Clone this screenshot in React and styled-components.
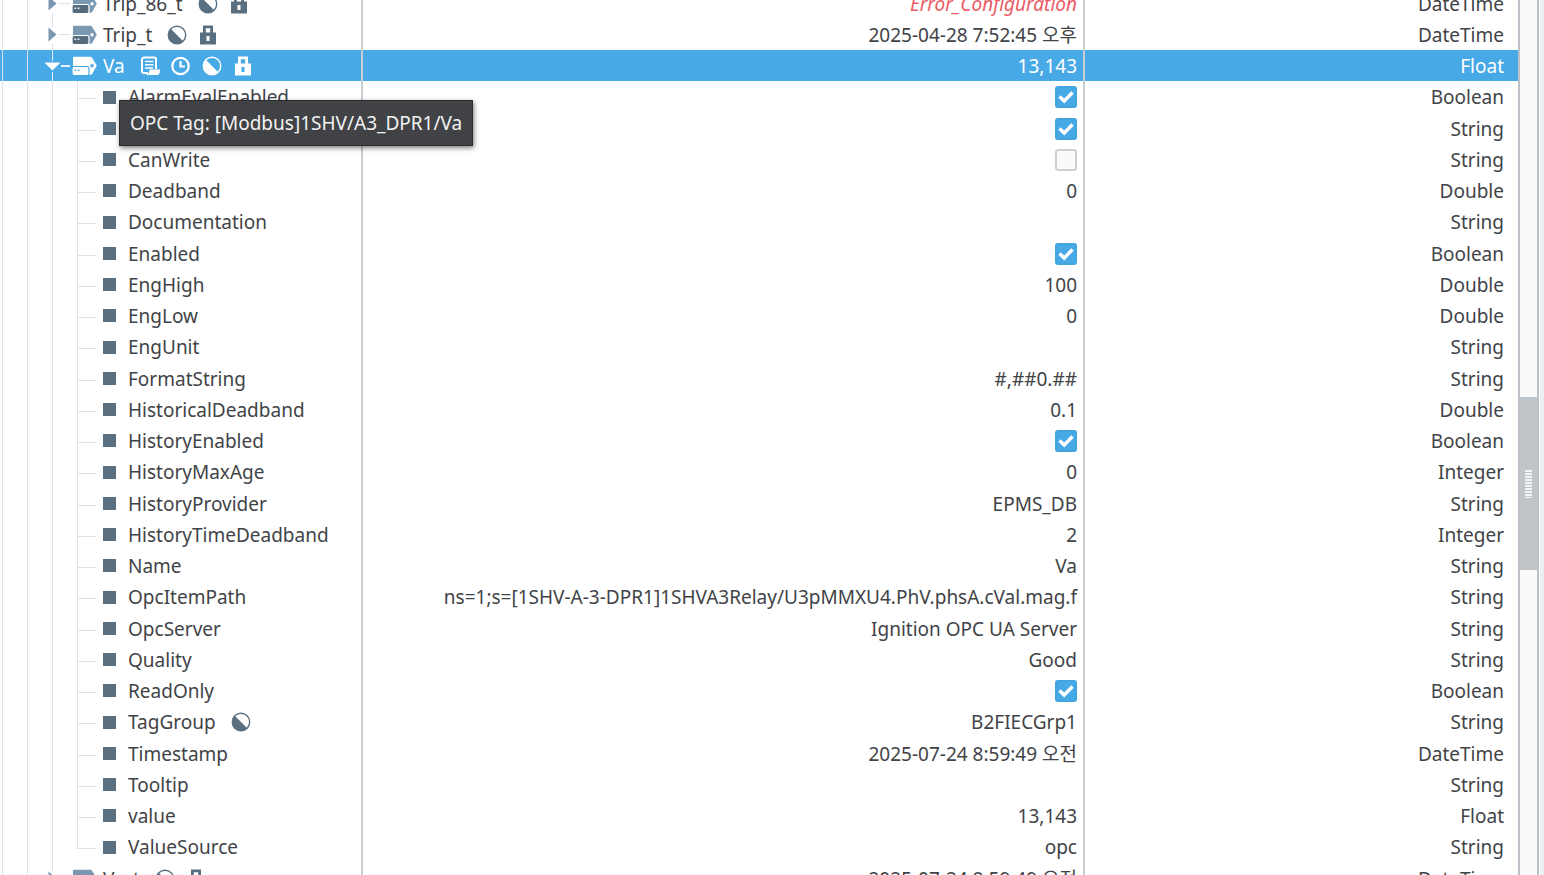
import React from "react";
import styled, { createGlobalStyle } from "styled-components";

const GlobalStyle = createGlobalStyle`
  * {
    box-sizing: border-box;
  }

  body {
    margin: 0;
    background-color: #ffffff;
    color: #414347;
    font-family: "Noto Sans", "Noto Sans CJK KR", sans-serif;
    font-size: 19px;
    line-height: 28px;
  }
`;

const Browser = styled.main`
  display: flex;
  height: 100vh;
  overflow: hidden;
`;

const Viewport = styled.div`
  flex: 1;
  min-width: 0;
  overflow: hidden;
`;

const TagTable = styled.table`
  width: 100%;
  margin-top: -12px;
  table-layout: fixed;
  border-collapse: separate;
  border-spacing: 0;
`;

const NameCol = styled.col`
  width: 363px;
`;

const ValueCol = styled.col`
  width: 722px;
`;

const Row = styled.tr`
  height: 31px;
  color: ${(props) => (props.$selected ? "#ffffff" : "inherit")};
  background-color: ${(props) => (props.$selected ? "#47a9e6" : "#ffffff")};

  &:nth-child(4n) {
    height: 32px;
  }
`;

const NameCell = styled.td`
  position: relative;
  height: inherit;
  padding: 0 0 0 2px;
  border-right: 2px solid #c8cdd1;
`;

const NameContent = styled.div`
  display: flex;
  align-items: center;
  height: 100%;
  white-space: nowrap;
`;

const ValueCell = styled.td`
  padding: 0 6px 0 0;
  border-right: 2px solid #c8cdd1;
  text-align: right;
  white-space: nowrap;
  color: ${(props) => (props.$error ? "#ec5a64" : "inherit")};
  font-style: ${(props) => (props.$error ? "italic" : "normal")};
`;

const TypeCell = styled.td`
  padding: 0 14px 0 0;
  text-align: right;
`;

const Guide = styled.span`
  flex: 0 0 25px;
  align-self: stretch;
  border-left: 1px solid #dce2e8;
`;

const Branch = styled.span`
  display: flex;
  flex-direction: column;
  flex: 0 0 26px;
  align-self: stretch;

  &::before {
    content: "";
    width: 18px;
    height: 17px;
    border-left: 1px solid #dce2e8;
    border-bottom: 1px solid #dce2e8;
  }

  &::after {
    content: "";
    flex: 1;
    border-left: ${(props) => (props.$last ? "none" : "1px solid #dce2e8")};
  }
`;

const Toggle = styled.button`
  display: block;
  height: 31px;
  margin: 0 0 0 -12px;
  padding: 0;
  border: none;
  background: none;

  svg {
    display: block;
  }
`;

const Square = styled.span`
  width: 13px;
  height: 13px;
  margin-right: 12px;
  background-color: #5a6f80;
`;

const Label = styled.span`
  margin-right: 15px;
`;

const Badges = styled.span`
  display: flex;
  gap: 11px;
  color: ${(props) => (props.$selected ? "#ffffff" : "#5a6f80")};

  svg {
    display: block;
  }
`;

const TagSvg = styled.svg`
  margin: 0 6px 0 1px;
`;

const CheckLabel = styled.label`
  display: grid;
  justify-content: end;
  align-items: center;
  justify-items: center;

  > * {
    grid-area: 1 / 1;
  }

  svg {
    pointer-events: none;
  }
`;

const CheckInput = styled.input`
  appearance: none;
  width: 22px;
  height: 22px;
  margin: 0;
  border: 2px solid #cdd0d3;
  border-radius: 3px;
  background-color: #fafafb;

  &:checked {
    border-color: #43a4e2;
    background-color: #47a9e6;
  }
`;

const Tooltip = styled.div`
  position: absolute;
  top: 50px;
  left: 119px;
  z-index: 1;
  padding: 8px 10px;
  border: 1px solid #2a2c2e;
  background-color: #404246;
  box-shadow: 1px 2px 5px rgba(0, 0, 0, 0.5);
  color: #f2f2f2;
  white-space: nowrap;
`;

const ScrollBar = styled.div`
  display: grid;
  grid-template-rows: 397fr 173fr 305fr;
  flex: 0 0 21px;
  border-left: 2px solid #bbc1c6;
  border-right: 2px solid #bbc1c6;
  background-color: #fafafa;
`;

const Thumb = styled.div`
  display: flex;
  grid-row: 2;
  align-items: center;
  justify-content: center;
  background-color: #bfc5c9;
`;

const Grip = styled.span`
  width: 7px;
  height: 28px;
  background: repeating-linear-gradient(#f3f4f5 0 2px, #bfc5c9 2px 3px);
`;

const Edge = styled.div`
  flex: 0 0 5px;
  border-left: 1px solid #ffffff;
  background-color: #eceef1;
`;

const tags = [
  {
    name: "Trip_86_t",
    value: "Error_Configuration",
    type: "DateTime",
    badges: ["group", "lock"],
    error: true,
  },
  {
    name: "Trip_t",
    value: "2025-04-28 7:52:45 오후",
    type: "DateTime",
    badges: ["group", "lock"],
  },
  {
    name: "Va",
    value: "13,143",
    type: "Float",
    badges: ["script", "history", "group", "lock"],
    selected: true,
    tooltip: "OPC Tag: [Modbus]1SHV/A3_DPR1/Va",
    properties: [
      { name: "AlarmEvalEnabled", value: true, type: "Boolean" },
      { name: "CanRead", value: true, type: "String" },
      { name: "CanWrite", value: false, type: "String" },
      { name: "Deadband", value: "0", type: "Double" },
      { name: "Documentation", value: "", type: "String" },
      { name: "Enabled", value: true, type: "Boolean" },
      { name: "EngHigh", value: "100", type: "Double" },
      { name: "EngLow", value: "0", type: "Double" },
      { name: "EngUnit", value: "", type: "String" },
      { name: "FormatString", value: "#,##0.##", type: "String" },
      { name: "HistoricalDeadband", value: "0.1", type: "Double" },
      { name: "HistoryEnabled", value: true, type: "Boolean" },
      { name: "HistoryMaxAge", value: "0", type: "Integer" },
      { name: "HistoryProvider", value: "EPMS_DB", type: "String" },
      { name: "HistoryTimeDeadband", value: "2", type: "Integer" },
      { name: "Name", value: "Va", type: "String" },
      {
        name: "OpcItemPath",
        value: "ns=1;s=[1SHV-A-3-DPR1]1SHVA3Relay/U3pMMXU4.PhV.phsA.cVal.mag.f",
        type: "String",
      },
      { name: "OpcServer", value: "Ignition OPC UA Server", type: "String" },
      { name: "Quality", value: "Good", type: "String" },
      { name: "ReadOnly", value: true, type: "Boolean" },
      {
        name: "TagGroup",
        value: "B2FIECGrp1",
        type: "String",
        badges: ["group"],
      },
      { name: "Timestamp", value: "2025-07-24 8:59:49 오전", type: "DateTime" },
      { name: "Tooltip", value: "", type: "String" },
      { name: "value", value: "13,143", type: "Float" },
      { name: "ValueSource", value: "opc", type: "String" },
    ],
  },
  {
    name: "Va_t",
    value: "2025-07-24 8:59:49 오전",
    type: "DateTime",
    badges: ["group", "lock"],
  },
];

const badgeShapes = {
  script: (
    <g fill="none" stroke="currentColor" strokeWidth="2">
      <path d="M8 17H4a2 2 0 0 1-2-2V3.500a2 2 0 0 1 2-2h10.500a1.500 1.500 0 0 1 1.500 1.500V13" />
      <path d="M5 5.500h8.500M5 8.700h8.500M5 12h8" strokeWidth="1.600" />
      <path
        d="M9.500 13.500h10.500c.2 3.500-1 5.500-3 5.500H5.500C8.500 18.500 9.500 16.500 9.500 13.500z"
        fill="currentColor"
        stroke="none"
      />
    </g>
  ),
  history: (
    <g fill="none" stroke="currentColor" strokeWidth="2.200">
      <circle cx="9.500" cy="10" r="8.200" />
      <path d="M9.500 5v5.500h4.500" />
    </g>
  ),
  group: (
    <g>
      <circle
        cx="10"
        cy="10"
        r="8.700"
        fill="none"
        stroke="currentColor"
        strokeWidth="1.400"
      />
      <path d="M3.500 3.500a9.200 9.200 0 0 0 13 13z" fill="currentColor" />
    </g>
  ),
  lock: (
    <path
      d="M5 .5h10v7h3v12H2v-12h3zM7.800 3.200v4.300h4.400V3.200zM8.500 11v5h3v-5z"
      fill="currentColor"
      fillRule="evenodd"
    />
  ),
};

const BadgeList = ({ names, selected }) => (
  <Badges $selected={selected}>
    {names.map((name) => (
      <svg key={name} width="20" height="20" viewBox="0 0 20 20">
        {badgeShapes[name]}
      </svg>
    ))}
  </Badges>
);

const TagIcon = ({ selected }) => (
  <TagSvg width="26" height="20" viewBox="0 0 26 20">
    <path
      d="M3 .8h16.500q1 0 1.500 1l4.800 7.700-4.500 8.200q-.5 1-1.500 1H2V2q0-1.200 1-1.200z"
      fill={selected ? "#ffffff" : "#7a98b1"}
    />
    <circle cx="21" cy="9.800" r="1.700" fill={selected ? "#47a9e6" : "#fff"} />
    <rect
      x="1"
      y="10.500"
      width="17"
      height="9"
      rx="2"
      fill={selected ? "#ffffff" : "#566b7c"}
      stroke={selected ? "#47a9e6" : "#ffffff"}
      strokeWidth="1.200"
    />
    <path
      d="M3.500 13.500h1.600v1.600H3.500zM6.700 13.500h1.600v1.600H6.700z"
      fill={selected ? "#47a9e6" : "#ffffff"}
    />
  </TagSvg>
);

const ToggleIcon = ({ open }) => (
  <svg width="30" height="31" viewBox="0 0 30 31">
    {open ? (
      <g fill="#ffffff">
        <path d="M12 0h1v11h-1zM12 22h1v9h-1zM21 15h9v2h-9z" opacity="0.85" />
        <path d="M4.500 12.500h16l-8 8z" />
      </g>
    ) : (
      <g>
        <path d="M12 0h1v8h-1zM12 25h1v6h-1zM19 15h11v1H19z" fill="#dce2e8" />
        <path d="M8.500 8.500l8 7-8 7z" fill="#7a98b1" />
      </g>
    )}
  </svg>
);

const CheckBox = ({ name, checked }) => (
  <CheckLabel>
    <CheckInput type="checkbox" aria-label={name} defaultChecked={checked} />
    {checked && (
      <svg width="16" height="14" viewBox="0 0 16 14">
        <path
          d="M1.500 6.500l4.700 4.500 8.300-8.500"
          fill="none"
          stroke="#ffffff"
          strokeWidth="3.400"
        />
      </svg>
    )}
  </CheckLabel>
);

const TagRow = ({ tag }) => (
  <Row $selected={tag.selected}>
    <NameCell>
      <NameContent>
        <Guide />
        <Guide />
        <Toggle aria-label={`Toggle ${tag.name}`}>
          <ToggleIcon open={tag.selected} />
        </Toggle>
        <TagIcon selected={tag.selected} />
        <Label>{tag.name}</Label>
        <BadgeList names={tag.badges} selected={tag.selected} />
      </NameContent>
      {tag.tooltip && <Tooltip role="tooltip">{tag.tooltip}</Tooltip>}
    </NameCell>
    <ValueCell $error={tag.error}>{tag.value}</ValueCell>
    <TypeCell>{tag.type}</TypeCell>
  </Row>
);

const PropertyRow = ({ property, last }) => (
  <Row>
    <NameCell>
      <NameContent>
        <Guide />
        <Guide />
        <Guide />
        <Branch $last={last} />
        <Square />
        <Label>{property.name}</Label>
        {property.badges && <BadgeList names={property.badges} />}
      </NameContent>
    </NameCell>
    <ValueCell>
      {typeof property.value === "boolean" ? (
        <CheckBox name={property.name} checked={property.value} />
      ) : (
        property.value
      )}
    </ValueCell>
    <TypeCell>{property.type}</TypeCell>
  </Row>
);

const App = () => (
  <>
    <GlobalStyle />
    <Browser>
      <Viewport>
        <TagTable>
          <colgroup>
            <NameCol />
            <ValueCol />
            <col />
          </colgroup>
          <tbody>
            {tags.map((tag) => (
              <React.Fragment key={tag.name}>
                <TagRow tag={tag} />
                {tag.properties?.map((property, index) => (
                  <PropertyRow
                    key={property.name}
                    property={property}
                    last={index === tag.properties.length - 1}
                  />
                ))}
              </React.Fragment>
            ))}
          </tbody>
        </TagTable>
      </Viewport>
      <ScrollBar>
        <Thumb>
          <Grip />
        </Thumb>
      </ScrollBar>
      <Edge />
    </Browser>
  </>
);

export default App;
